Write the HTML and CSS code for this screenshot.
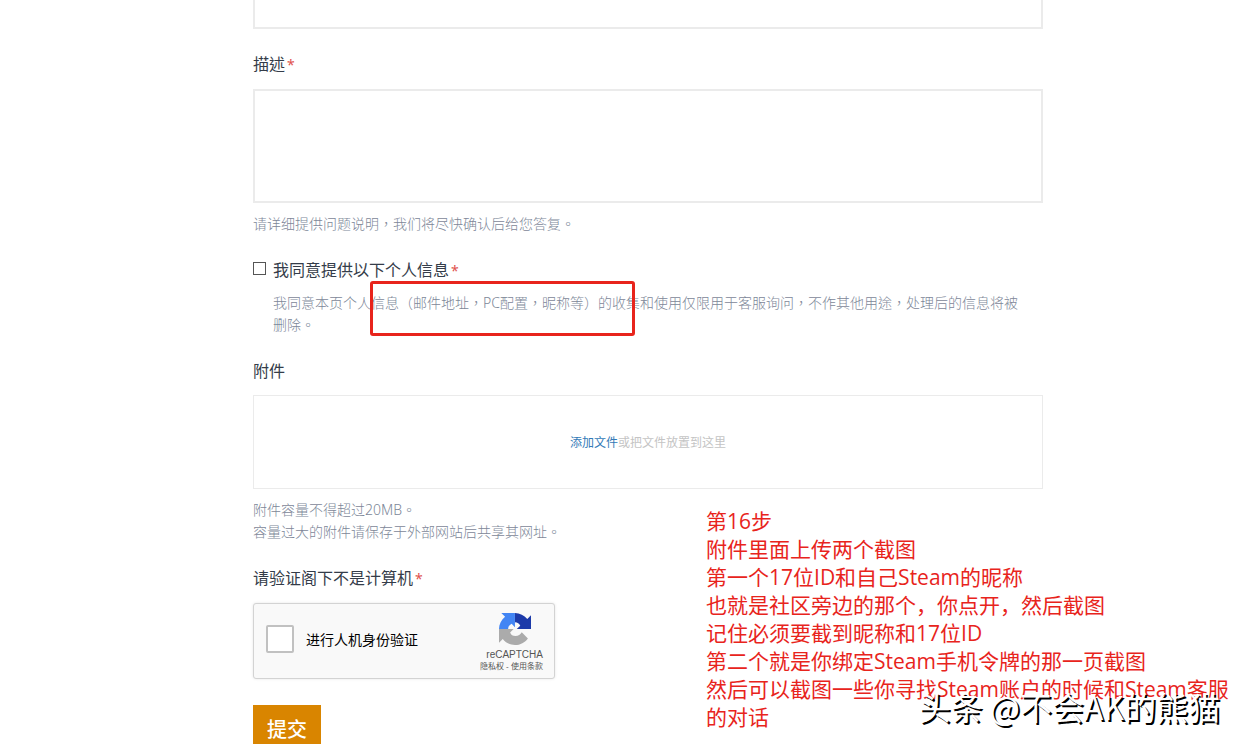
FILE: index.html
```html
<!DOCTYPE html>
<html lang="zh-TW">
<head>
<meta charset="utf-8">
<title>提交请求</title>
<link rel="stylesheet" href="styles.css">
</head>
<body>
<main class="page">
  <form class="form">
    <input class="subject" type="text" aria-label="主题">

    <div class="field">
      <label class="label" for="description">描述<span class="required">*</span></label>
      <textarea class="description" id="description"></textarea>
      <p class="hint">请详细提供问题说明，我们将尽快确认后给您答复。</p>
    </div>

    <div class="field consent">
      <input class="consent-box" type="checkbox" id="consent">
      <div class="consent-text">
        <label class="label" for="consent">我同意提供以下个人信息<span class="required">*</span></label>
        <p class="hint">我同意本页个人信息（邮件地址，PC配置，昵称等）的收集和使用仅限用于客服询问，不作其他用途，处理后的信息将被<br>删除。</p>
        <div class="highlight"></div>
      </div>
    </div>

    <div class="field">
      <h2 class="label">附件</h2>
      <div class="dropzone"><a class="add-file" href="#">添加文件</a><span>或把文件放置到这里</span></div>
      <p class="hint">附件容量不得超过20MB。<br>容量过大的附件请保存于外部网站后共享其网址。</p>
    </div>

    <div class="field">
      <h2 class="label">请验证阁下不是计算机<span class="required">*</span></h2>
      <div class="captcha" lang="zh-CN">
        <input class="captcha-box" type="checkbox" id="human">
        <label class="captcha-label" for="human">进行人机身份验证</label>
        <div class="captcha-brand">
          <svg class="captcha-logo" viewBox="0 0 64 64" aria-hidden="true">
            <path fill="#1c3aa9" d="M64 31.900V4.600l-7.500 7.600C50.300 4.700 41.700 0 32 0v18.300c5 0 8.500 3 10.500 7l-7 6.600z"/>
            <path fill="#4285f4" d="M31.900 0H4.600l7.600 7.500C4.700 13.700 0 22.200 0 32h18.300c0-5 3-8.500 7-10.500l6.600 7z"/>
            <path fill="#ababab" d="M0 32v27.300l7.500-7.500C13.400 59.200 22.200 64 32 64c10.600 0 20-5.200 25.800-13.200L45.500 38.400C43 43 38.500 46 33 46c-5.500 0-9.300-2.500-10.700-7.200l6.900-6.800z"/>
          </svg>
          <span class="captcha-name">reCAPTCHA</span>
          <span class="captcha-links"><a href="#">隐私权</a> - <a href="#">使用条款</a></span>
        </div>
      </div>
    </div>

    <button class="submit" type="submit">提交</button>
  </form>

  <aside class="note" lang="zh-CN">第16步<br>附件里面上传两个截图<br>第一个17位ID和自己Steam的昵称<br>也就是社区旁边的那个，你点开，然后截图<br>记住必须要截到昵称和17位ID<br>第二个就是你绑定Steam手机令牌的那一页截图<br>然后可以截图一些你寻找Steam账户的时候和Steam客服<br>的对话</aside>
  <div class="watermark" lang="zh-CN">头条 @不会AK的熊猫</div>
</main>
</body>
</html>
```
FILE: styles.css
```css
* {
  box-sizing: border-box;
}

html,
body {
  height: 100%;
  margin: 0;
}

body {
  background: #fff;
  color: #343c49;
  font-family: "Noto Sans", "Noto Sans CJK TC", sans-serif;
}

.page {
  position: relative;
  height: 100%;
  overflow: hidden;
  padding: 0 199px 0 253px;
}

.form {
  display: flex;
  flex-direction: column;
  align-items: stretch;
}

.subject {
  height: 29px;
  border: 2px solid #ebebeb;
  border-top: 0;
  background: #fff;
}

.field {
  margin-top: 24px;
}

.label {
  display: block;
  margin: 0;
  font-size: 16px;
  font-weight: 400;
  line-height: 23px;
}

.required {
  margin-left: 2px;
  color: #e0524d;
  font-size: 14px;
}

.description {
  display: block;
  width: 100%;
  height: 114px;
  margin-top: 13px;
  border: 2px solid #ebebeb;
  background: #fff;
  resize: none;
}

.hint {
  margin: 10px 0 0;
  color: #7d8798;
  font-size: 14px;
  font-weight: 300;
  line-height: 22px;
}

.consent {
  display: flex;
  gap: 7px;
}

.consent-box {
  appearance: none;
  width: 13px;
  height: 13px;
  margin: 3px 0 0;
  border: 1px solid #555;
  background: #fff;
}

.consent-text {
  position: relative;
  flex: 1;
}

.highlight {
  position: absolute;
  top: 22px;
  left: 97px;
  width: 265px;
  height: 55px;
  border: 3px solid #e8241c;
  border-radius: 3px;
}

.dropzone {
  display: flex;
  align-items: center;
  justify-content: center;
  height: 94px;
  margin-top: 12px;
  border: 1px solid #ebebeb;
  color: #c4c4c4;
  font-size: 12px;
}

.add-file {
  color: #337ab7;
  text-decoration: none;
}

.captcha {
  display: flex;
  align-items: center;
  width: 302px;
  height: 76px;
  margin-top: 13px;
  padding: 0 11px 0 12px;
  border: 1px solid #d3d3d3;
  border-radius: 3px;
  background: #f9f9f9;
  box-shadow: 0 0 3px rgba(0, 0, 0, 0.1);
  color: #000;
  font-family: "Liberation Sans", "Noto Sans CJK SC", sans-serif;
}

.captcha-box {
  appearance: none;
  width: 28px;
  height: 28px;
  margin: 0 12px 4px 0;
  border: 2px solid #c1c1c1;
  border-radius: 2px;
  background: #fff;
}

.captcha-label {
  flex: 1;
  padding-bottom: 4px;
  font-size: 14px;
}

.captcha-brand {
  display: flex;
  flex-direction: column;
  align-items: flex-end;
  padding-top: 4px;
  color: #555;
}

.captcha-logo {
  width: 32px;
  height: 32px;
  margin-right: 12px;
}

.captcha-name {
  margin-top: 4px;
  font-size: 10px;
  line-height: 12px;
}

.captcha-links {
  font-size: 8px;
  line-height: 12px;
}

.captcha-links a {
  color: inherit;
  text-decoration: none;
}

.submit {
  align-self: flex-start;
  height: 46px;
  margin-top: 26px;
  padding: 0 14px;
  border: 0;
  background: #d98500;
  color: #fff;
  font-family: "Noto Sans", "Noto Sans CJK TC", sans-serif;
  font-size: 20px;
  font-weight: 500;
}

.note {
  position: absolute;
  top: 507px;
  left: 706px;
  color: #e8241c;
  font-family: "Open Sans", "Noto Sans CJK SC", sans-serif;
  font-size: 21px;
  font-weight: 400;
  line-height: 28px;
  white-space: nowrap;
}

.watermark {
  position: absolute;
  right: 22px;
  bottom: 18px;
  color: #fff;
  font-family: "Noto Sans CJK SC", sans-serif;
  font-size: 32px;
  line-height: 40px;
  text-shadow: 2px 2px 0 #000;
  white-space: nowrap;
}
```
